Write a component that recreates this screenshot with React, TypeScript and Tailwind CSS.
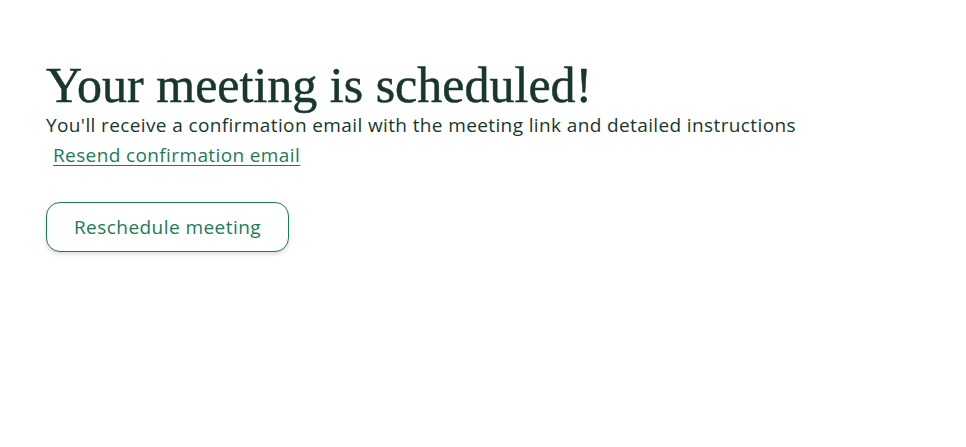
export default function App() {
  return (
    <div className="min-h-screen bg-white px-[46px] pt-[57px]" style={{ fontFamily: '"Open Sans", Arial, sans-serif' }}>
      <h1
        className="text-[50px] leading-[56px] text-[#17382b] [-webkit-text-stroke:0.5px_#17382b]"
        style={{ fontFamily: '"Liberation Serif", "Times New Roman", serif' }}
      >
        Your meeting is scheduled!
      </h1>
      <p className="text-[19px] leading-[24px] tracking-[0.38px] text-[#17382b]">
        You'll receive a confirmation email with the meeting link and detailed instructions
      </p>
      <a href="#" className="ml-[7px] mt-[6px] inline-block text-[19px] leading-[24px] tracking-[0.38px] text-[#1e7a57] underline underline-offset-[3px]">
        Resend confirmation email
      </a>
      <div className="mt-[34px]">
        <button className="h-[50px] w-[243px] rounded-[14px] border border-[#1e7a57] bg-white text-[19px] tracking-[0.45px] text-[#1e7a57] shadow-[0_2px_4px_rgba(0,0,0,0.15)]">
          Reschedule meeting
        </button>
      </div>
    </div>
  )
}
